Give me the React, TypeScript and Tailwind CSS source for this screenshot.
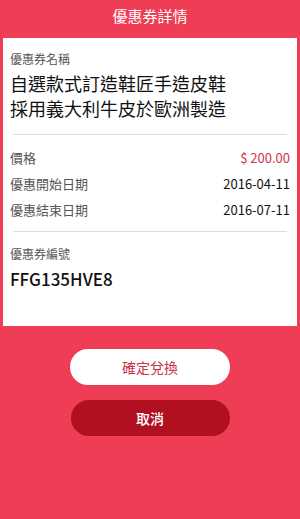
export default function App() {
  const rows = [
    { label: '價格', value: '$ 200.00', red: true },
    { label: '優惠開始日期', value: '2016-04-11' },
    { label: '優惠結束日期', value: '2016-07-11' },
  ];

  return (
    <div
      className="w-[300px] h-[519px] bg-[#ee3d55] flex flex-col"
      style={{ fontFamily: '"Noto Sans CJK TC", "Noto Sans", sans-serif' }}
    >
      <div className="h-[32px] flex items-center justify-center text-white text-[15px]">優惠券詳情</div>
      <div className="mx-[3px] mt-[6px] h-[288px] bg-white px-[7px] flex flex-col">
        <div className="pt-[12px] text-[12px] text-[#555] leading-[18px]">優惠券名稱</div>
        <div className="mt-[3px] text-[18px] leading-[25px] text-[#111]">
          自選款式訂造鞋匠手造皮鞋
          <br />
          採用義大利牛皮於歐洲製造
        </div>
        <div className="mt-[13px] mx-[3px] h-px bg-[#ddd]" />
        <div className="mt-[13px] flex flex-col gap-[6px]">
          {rows.map((r) => (
            <div key={r.label} className="flex items-center justify-between h-[20px] text-[13px]">
              <span className="text-[#555]">{r.label}</span>
              <span className={r.red ? 'text-[#d0334f]' : 'text-[#111]'}>{r.value}</span>
            </div>
          ))}
        </div>
        <div className="mt-[11px] mx-[3px] h-px bg-[#ddd]" />
        <div className="mt-[13px] text-[12px] text-[#555] leading-[18px]">優惠券編號</div>
        <div className="mt-[5px] text-[17px] font-medium text-[#111] leading-[22px]">FFG135HVE8</div>
      </div>
      <div className="mt-[23px] flex flex-col items-center gap-[15px]">
        <button className="w-[160px] h-[36px] rounded-full bg-white text-[#c8334b] text-[14px]">確定兌換</button>
        <button className="w-[159px] h-[36px] rounded-full bg-[#b01020] text-white text-[14px] font-medium">取消</button>
      </div>
    </div>
  );
}
